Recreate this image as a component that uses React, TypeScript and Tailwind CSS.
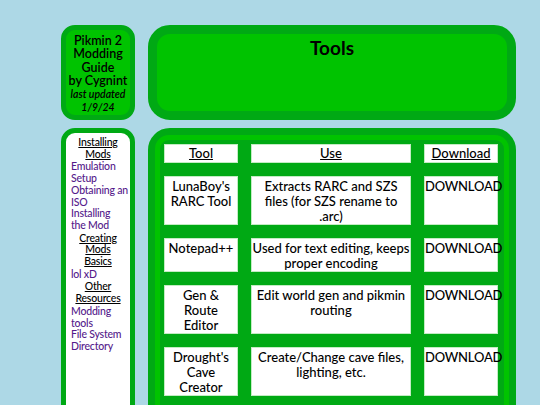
import React from 'react';

const tools = [
  { name: ["LunaBoy's", 'RARC Tool'], use: ['Extracts RARC and SZS', 'files (for SZS rename to', '.arc)'] },
  { name: ['Notepad++'], use: ['Used for text editing, keeps', 'proper encoding'] },
  { name: ['Gen &', 'Route', 'Editor'], use: ['Edit world gen and pikmin', 'routing'] },
  { name: ["Drought's", 'Cave', 'Creator'], use: ['Create/Change cave files,', 'lighting, etc.'] },
];

const nav: { title: string[]; links: string[][] }[] = [
  { title: ['Installing', 'Mods'], links: [['Emulation', 'Setup'], ['Obtaining an', 'ISO'], ['Installing', 'the Mod']] },
  { title: ['Creating', 'Mods', 'Basics'], links: [['lol xD']] },
  { title: ['Other', 'Resources'], links: [['Modding', 'tools'], ['File System', 'Directory']] },
];

const Lines = ({ lines }: { lines: string[] }) => (
  <>
    {lines.map((l) => (
      <div key={l} className="whitespace-nowrap">{l}</div>
    ))}
  </>
);

export default function App() {
  return (
    <div
      className="min-h-screen bg-[#add8e6] pl-[61px] pt-[25px] text-black"
      style={{ fontFamily: 'Lato, "Open Sans", sans-serif' }}
    >
      {/* Top row */}
      <div className="flex gap-[13px]">
        <div className="w-[74px] h-[95px] rounded-[14px] border-[5px] border-[#00a914] bg-[#00c300] pt-[4px] text-center">
          <div className="text-[12.5px] leading-[13.4px] font-semibold">
            Pikmin 2<br />Modding<br />Guide<br />by Cygnint
          </div>
          <div className="text-[10.5px] leading-[13.4px] italic font-semibold">
            last updated<br />1/9/24
          </div>
        </div>
        <div className="w-[368px] h-[95px] rounded-[22px] border-[9px] border-[#00a914] bg-[#00c300] pt-[2px] text-center">
          <h1 className="text-[19px] font-bold leading-[24px]">Tools</h1>
        </div>
      </div>

      {/* Body row */}
      <div className="mt-[8px] flex items-stretch gap-[13px]">
        <div className="w-[74px] rounded-[14px] border-[5px] border-[#00a914] bg-white pl-[5px] pt-[4px] pb-[20px] text-[10.5px] leading-[11.7px] font-medium tracking-[-0.2px]">
          {nav.map((sec) => (
            <div key={sec.title.join(' ')} className="mb-[1px]">
              <div className="mb-[1px] pr-[5px] text-center underline">
                <Lines lines={sec.title} />
              </div>
              {sec.links.map((l) => (
                <div key={l.join(' ')} className="text-[#551a8b]">
                  <Lines lines={l} />
                </div>
              ))}
            </div>
          ))}
        </div>

        <div className="w-[368px] rounded-[22px] border-[7px] border-[#00a914] bg-[#00a914]">
          <div className="rounded-[14px] border-[5px] border-[#00c300] bg-[#00a914] p-[4px] pb-[30px]">
            <div className="grid grid-cols-[74px_160px_74px] gap-[13px] text-[13px] leading-[15px] font-medium">
              <div className="h-[19px] border border-[#c3ecc3] bg-white text-center leading-[17px] underline">Tool</div>
              <div className="h-[19px] border border-[#c3ecc3] bg-white text-center leading-[17px] underline">Use</div>
              <div className="h-[19px] border border-[#c3ecc3] bg-white text-center leading-[17px] underline">Download</div>
              {tools.map((t) => (
                <React.Fragment key={t.name.join(' ')}>
                  <div className="border border-[#c3ecc3] bg-white pt-[2px] text-center">
                    <Lines lines={t.name} />
                  </div>
                  <div className="border border-[#c3ecc3] bg-white pt-[2px] text-center">
                    <Lines lines={t.use} />
                  </div>
                  <div className="border border-[#c3ecc3] bg-white pt-[2px] tracking-[-0.2px]">DOWNLOAD</div>
                </React.Fragment>
              ))}
            </div>
          </div>
        </div>
      </div>
    </div>
  );
}
